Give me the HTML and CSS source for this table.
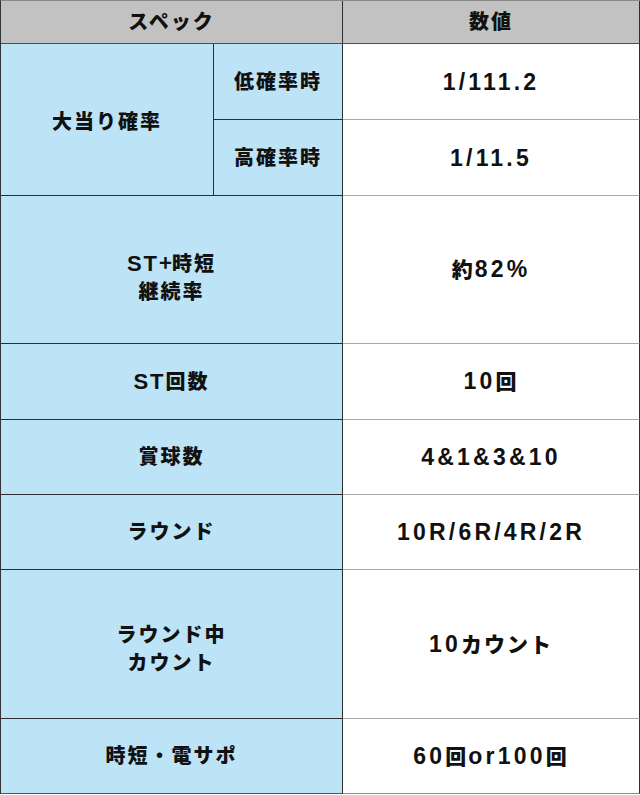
FILE: index.html
```html
<!DOCTYPE html>
<html lang="ja">
<head>
<meta charset="utf-8">
<link rel="stylesheet" href="styles.css">
</head>
<body>
<div class="spec">
  <div class="cell head span2">スペック</div>
  <div class="cell head val">数値</div>

  <div class="cell lab rows2 drop-s">大当り確率</div>
  <div class="cell lab">低確率時</div>
  <div class="cell val num">1/111.2</div>
  <div class="cell lab">高確率時</div>
  <div class="cell val num">1/11.5</div>

  <div class="cell lab span2 drop-l"><span><span class="lt">ST</span><span class="plus">+</span>時短<br>継続率</span></div>
  <div class="cell val num"><span><span class="jp">約</span>82%</span></div>

  <div class="cell lab span2"><span><span class="lt">ST</span>回数</span></div>
  <div class="cell val num"><span>10<span class="jp">回</span></span></div>

  <div class="cell lab span2">賞球数</div>
  <div class="cell val num">4&amp;1&amp;3&amp;10</div>

  <div class="cell lab span2">ラウンド</div>
  <div class="cell val num">10R/6R/4R/2R</div>

  <div class="cell lab span2 drop-m"><span>ラウンド中<br>カウント</span></div>
  <div class="cell val num"><span>10<span class="jp">カウント</span></span></div>

  <div class="cell lab span2 last">時短・電サポ</div>
  <div class="cell val num last"><span>60<span class="jp">回</span>or100<span class="jp">回</span></span></div>
</div>
</body>
</html>
```
FILE: styles.css
```css
html, body {
  margin: 0;
  padding: 0;
  background: #ffffff;
}
.spec {
  width: 640px;
  box-sizing: border-box;
  display: grid;
  grid-template-columns: 213px 129px 297px;
  grid-template-rows: 43px 76px 76px 148px 76px 75px 75px 149px 75px;
  border-left: 1px solid #333333;
  border-top: 1px solid #8a8a8a;
}
.cell {
  box-sizing: border-box;
  display: flex;
  align-items: center;
  justify-content: center;
  text-align: center;
  border-right: 1px solid #2e2e2e;
  border-bottom: 1px solid #2e2e2e;
  font-family: "Liberation Sans", "Noto Sans CJK JP", sans-serif;
  font-weight: 900;
  font-size: 20px;
  letter-spacing: 2px;
  line-height: 28px;
  color: #111111;
}
.head {
  background: #c2c2c2;
  border-bottom-color: #505050;
}
.lab {
  background: #bde3f7;
}
.val {
  background: #ffffff;
  border-bottom-color: #a8a8a8;
}
.head.val {
  background: #c2c2c2;
  border-bottom-color: #505050;
}
.num {
  font-size: 23px;
  letter-spacing: 3.2px;
}
.jp {
  font-size: 21px;
  letter-spacing: 2px;
}
.lt {
  font-size: 22px;
  letter-spacing: 2px;
}
.plus {
  font-family: "Noto Sans CJK JP", sans-serif;
  font-size: 22px;
  font-weight: 700;
  letter-spacing: 0;
}
.drop-s {
  padding-top: 5px;
}
.drop-m {
  padding-top: 9px;
}
.drop-l {
  padding-top: 14px;
}
.span2 {
  grid-column: span 2;
}
.rows2 {
  grid-row: span 2;
}
.last {
  border-bottom-color: #555555;
}
.val.last {
  border-bottom-color: #8a8a8a;
}
```
